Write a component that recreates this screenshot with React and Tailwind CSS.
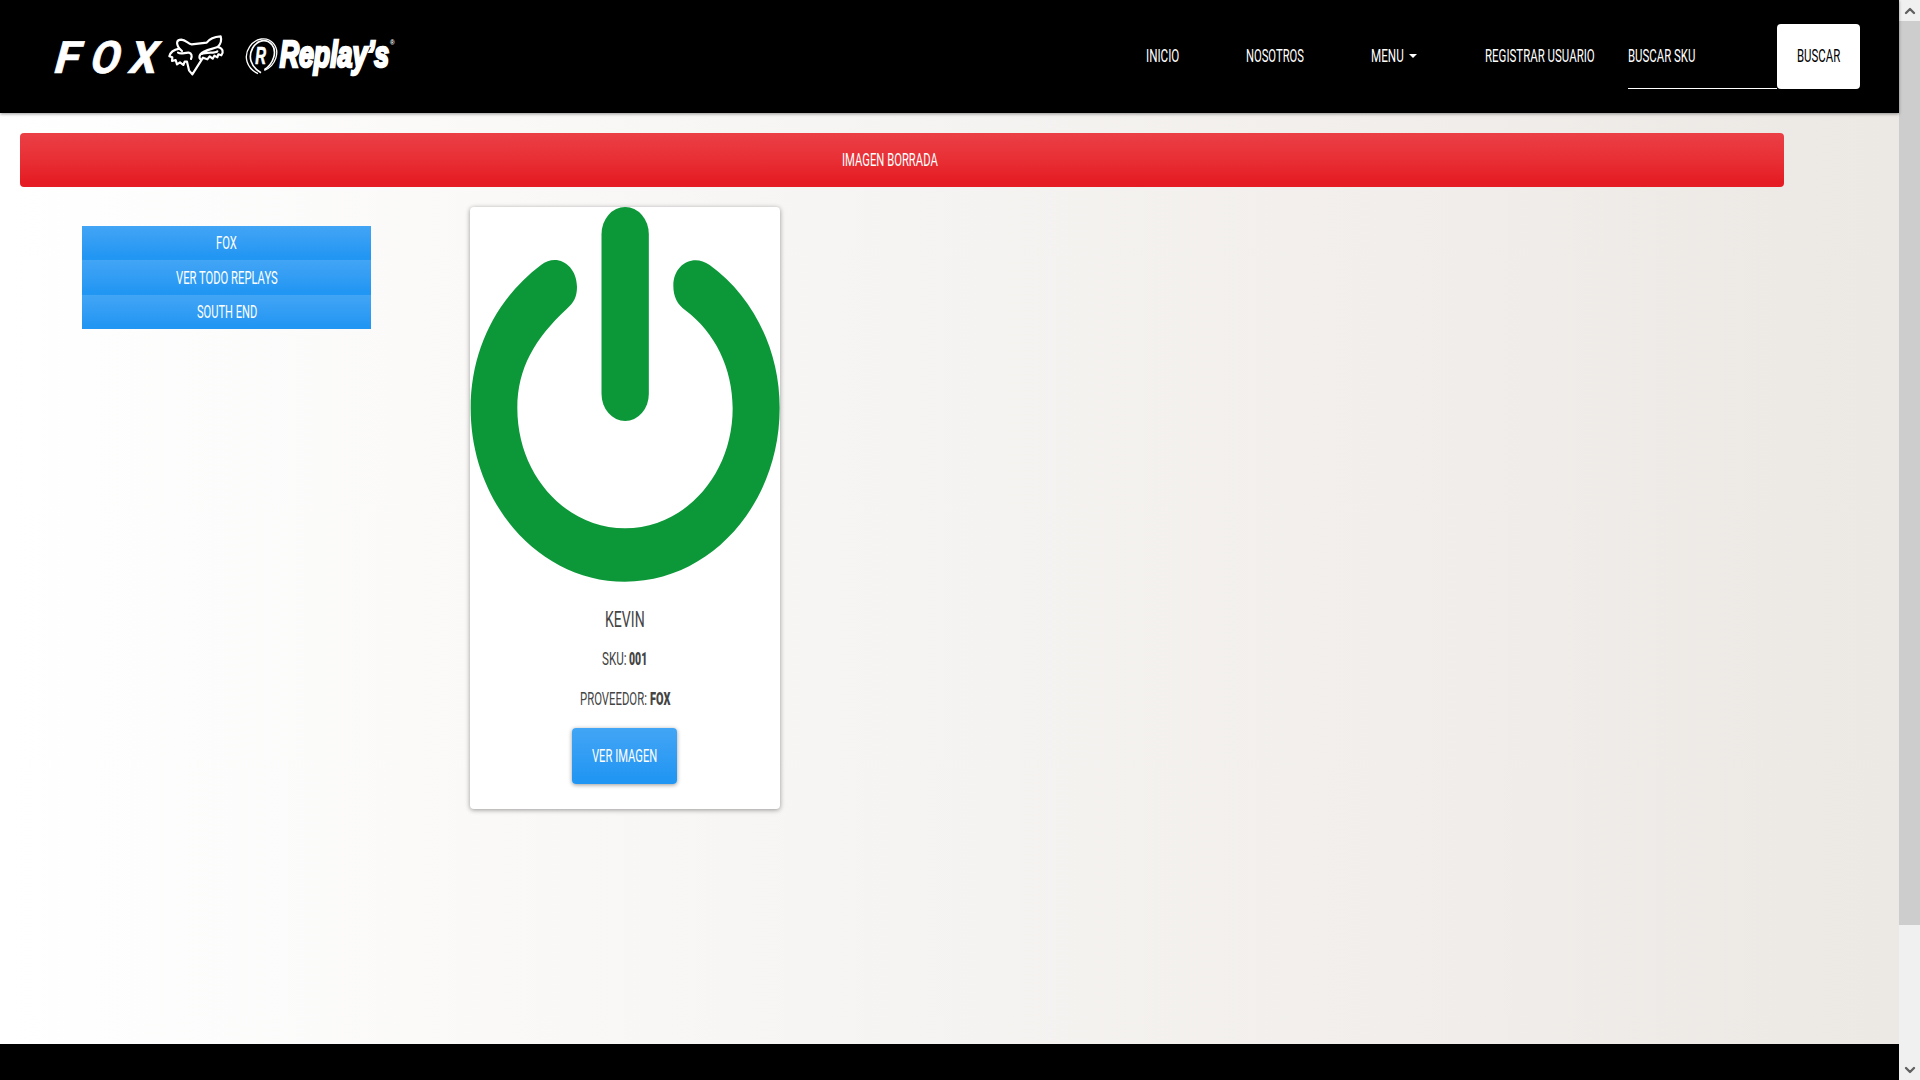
import { useLayoutEffect, useRef, useState } from 'react';
import { ChevronDown, ChevronUp } from 'lucide-react';

// Condensed label: squeezes its glyphs horizontally to a fixed advance width.
function Label({ children, width, className = '' }) {
  const ref = useRef(null);
  const [scale, setScale] = useState(0.6);
  useLayoutEffect(() => {
    const fit = () => {
      if (ref.current) setScale(width / ref.current.offsetWidth);
    };
    fit();
    document.fonts?.ready.then(fit);
  }, [width, children]);
  return (
    <span className="inline-flex shrink-0 justify-start" style={{ width }}>
      <span
        ref={ref}
        className={`inline-block shrink-0 origin-left whitespace-nowrap leading-6 ${className}`}
        style={{ transform: `scaleX(${scale})` }}
      >
        {children}
      </span>
    </span>
  );
}

function FoxLogo() {
  return (
    <svg className="h-[70px] w-[190px] shrink-0" viewBox="0 0 570 210" fill="#fff">
      <g fontFamily="Roboto" fontWeight="700" fontSize="134" stroke="#fff" strokeWidth="2">
        <text transform="translate(35 158) skewX(-15)" textLength="76" lengthAdjust="spacingAndGlyphs">F</text>
        <text transform="translate(144 158) skewX(-15)" textLength="88" lengthAdjust="spacingAndGlyphs">O</text>
        <text transform="translate(261 158) skewX(-15)" textLength="82" lengthAdjust="spacingAndGlyphs">X</text>
      </g>
      <g fill="none" stroke="#fff" strokeWidth="6.5" strokeLinejoin="round" strokeLinecap="round">
        <path d="M418 86C407 69 410 59 424 59C438 60 444 72 455 73L500 68C508 57 524 50 542 49C546 62 541 73 533 81C550 84 551 97 544 106L535 103L532 112L523 107L518 116L509 109L502 118L489 113L457 163L447 151L441 125L434 125L430 135L420 127L411 133L407 120L396 123L397 112L388 109C391 94 402 89 418 86" />
        <path d="M414 98C424 104 435 97 446 98C455 100 457 107 453 117M418 86L426 93M533 81C515 88 491 90 481 103C477 110 478 115 481 118M485 102C501 95 524 101 532 94" />
      </g>
    </svg>
  );
}

function ReplaysLogo() {
  return (
    <svg className="h-[70px] w-[180px] shrink-0 overflow-visible" viewBox="0 0 540 210" fill="#fff">
      <g fill="none" stroke="#fff">
        <path d="M84 161C50 145 39 109 59 80C76 54 111 48 130 70C151 94 138 137 103 151" strokeWidth="4" />
        <path d="M93 158C61 140 54 110 68 84C82 60 108 55 125 73C142 93 132 130 103 149" strokeWidth="5" />
      </g>
      <g fontFamily="Liberation Sans" fontWeight="700" fontStyle="italic" stroke="#fff">
        <text transform="translate(76 133) scale(0.64 1)" fontSize="70" strokeWidth="2">R</text>
        <text transform="translate(149 140) scale(0.71 1)" fontSize="113" strokeWidth="8">Replay’s</text>
      </g>
      <text x="480" y="74" fontFamily="Liberation Sans" fontSize="19" fontWeight="700">®</text>
    </svg>
  );
}

function PowerImage() {
  return (
    <svg className="block h-[375px] w-[310px] rounded-t" viewBox="30 36 930 1125" preserveAspectRatio="none" fill="#0c9839">
      <rect x="424.5" y="36" width="142" height="642" rx="71" ry="82" />
      <path d="M243 210C110 310 32 465 32 640C32 928 240 1160 495 1160C751 1160 959 928 959 638C959 465 880 305 749 210C700 175 640 208 640 272C640 305 652 328 676 346C765 412 818 520 818 640C818 840 674 1000 495 1000C317 1000 172 840 172 640C172 520 225 430 320 342C342 322 351 305 351 275C350 208 290 173 243 210Z" />
    </svg>
  );
}

const text = "font-['Roboto'] text-[17.6px]";
const label = text + ' font-[450]';
const sideItems = [
  { name: 'FOX', width: 21, height: 'h-[34px]' },
  { name: 'VER TODO REPLAYS', width: 102, height: 'h-[35px]' },
  { name: 'SOUTH END', width: 60, height: 'h-[34px]' },
];

export default function App() {
  return (
    <div className="flex h-[1080px] w-[1920px] overflow-hidden font-['Roboto',sans-serif]">
      <div className="flex w-[1899px] shrink-0 flex-col">
        <header className="z-10 flex h-[113px] shrink-0 items-center bg-black text-white shadow-[0_1px_3px_rgba(0,0,0,0.4)]">
          <a className="-mt-[3px] flex h-[70px] pl-10">
            <FoxLogo />
            <ReplaysLogo />
          </a>
          <nav className="mb-px ml-[736px] flex items-center">
            <a className="flex"><Label width={33} className={label}>INICIO</Label></a>
            <a className="ml-[67px] flex"><Label width={58} className={label}>NOSOTROS</Label></a>
            <a className="ml-[67px] flex items-center">
              <Label width={32.5} className={label}>MENU</Label>
              <span className="ml-[5.5px] border-x-4 border-t-4 border-x-transparent border-t-white" />
            </a>
            <a className="ml-[67.5px] flex"><Label width={109.5} className={label}>REGISTRAR USUARIO</Label></a>
          </nav>
          <form className="ml-[33.5px] flex">
            <div className="flex h-[65px] w-[149px] items-center border-b border-white">
              <Label width={67.5} className={label}>BUSCAR SKU</Label>
            </div>
            <button type="button" className="flex h-[65px] w-[83px] items-center justify-center rounded bg-white pb-px pl-px text-black">
              <Label width={43.5} className={label}>BUSCAR</Label>
            </button>
          </form>
        </header>

        <main className="flex-1 bg-linear-to-r from-white to-[#ece8e4] pt-5">
          <div className="ml-5 flex h-[54px] w-[1764px] items-center justify-center rounded bg-linear-to-b from-[#eb3f46] to-[#e51c23] to-90% pr-6 text-white">
            <Label width={96} className={label}>IMAGEN BORRADA</Label>
          </div>
          <div className="mt-5 flex items-start">
            <aside className="ml-[82px] mt-[19px] w-[289px] text-white">
              {sideItems.map((item) => (
                <a key={item.name} className={`flex items-center justify-center bg-linear-to-b from-[#42a5f5] to-[#2196f3] to-90% ${item.height}`}>
                  <Label width={item.width} className={label}>{item.name}</Label>
                </a>
              ))}
            </aside>
            <article className="ml-[99px] flex h-[602px] w-[310px] flex-col items-center rounded bg-white text-[#444] shadow-[0_1px_5px_rgba(0,0,0,0.4)]">
              <PowerImage />
              <h4 className="mt-[26px] flex h-6"><Label width={40} className="font-['Roboto'] text-[21.5px] font-[450]">KEVIN</Label></h4>
              <p className="mt-[15px] flex h-6 gap-[2.5px]">
                <Label width={24.5} className={text}>SKU:</Label>
                <Label width={18.5} className={text + ' font-black'}>001</Label>
              </p>
              <p className="mt-4 flex h-6 gap-[2.5px]">
                <Label width={67} className={text}>PROVEEDOR:</Label>
                <Label width={20.5} className={text + ' font-black'}>FOX</Label>
              </p>
              <button type="button" className="mr-px mt-[17px] flex h-14 w-[105px] items-center justify-center rounded bg-linear-to-b from-[#42a5f5] to-[#2196f3] to-90% text-white shadow-[0_1px_4px_rgba(0,0,0,0.4)]">
                <Label width={65.5} className={label}>VER IMAGEN</Label>
              </button>
            </article>
          </div>
        </main>
        <footer className="h-9 shrink-0 bg-black" />
      </div>

      <div className="flex w-[21px] shrink-0 flex-col items-center bg-[#f0f0f0] text-[#606060]">
        <div className="flex h-[21px] items-center justify-center"><ChevronUp size={16} strokeWidth={3.5} /></div>
        <div className="h-[904px] w-full bg-[#cdcdcd]" />
        <div className="mt-auto flex h-[21px] items-center justify-center"><ChevronDown size={16} strokeWidth={3.5} /></div>
      </div>
    </div>
  );
}
